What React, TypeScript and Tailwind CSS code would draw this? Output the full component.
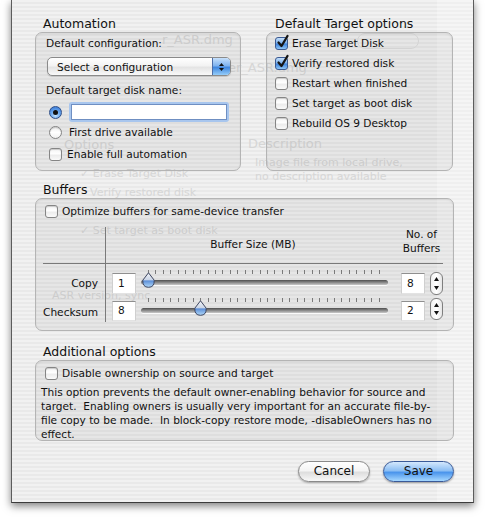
import React from "react";

const F = "font-['DejaVu_Sans',sans-serif]";
const stripes =
  "bg-[repeating-linear-gradient(180deg,#f1f1f1_0px,#f1f1f1_2px,#e9e9e9_2px,#e9e9e9_4px)]";
const groupBox =
  "rounded-[7px] border border-[#b4b4b4] bg-[rgba(0,0,0,0.045)] shadow-[inset_0_1px_2px_rgba(0,0,0,0.07)]";
const label = "text-[10.6px] leading-[14px] text-[#111] whitespace-nowrap";

function Checkbox({ checked }: { checked?: boolean }) {
  if (checked) {
    return (
      <span className="relative inline-block w-[13px] h-[13px] shrink-0 rounded-[3px] border border-[#3b5a92] bg-[linear-gradient(180deg,#c3def9_0%,#7fb2ee_45%,#3f83dc_55%,#8ec6f7_100%)]">
        <svg className="absolute left-[0px] top-[-4px]" width="14" height="15" viewBox="0 0 14 15">
          <path
            d="M2.5 8.5 L5.5 12 L11.5 2"
            fill="none"
            stroke="#151515"
            strokeWidth="2.3"
            strokeLinecap="round"
            strokeLinejoin="round"
          />
        </svg>
      </span>
    );
  }
  return (
    <span className="inline-block w-[13px] h-[13px] shrink-0 rounded-[3px] border border-[#858585] bg-[linear-gradient(180deg,#f4f4f4_0%,#ffffff_45%,#ececec_55%,#fafafa_100%)] shadow-[inset_0_1px_1px_rgba(0,0,0,0.18)]" />
  );
}

function Radio({ selected }: { selected?: boolean }) {
  if (selected) {
    return (
      <span className="relative inline-flex items-center justify-center w-[13px] h-[13px] shrink-0 rounded-full border border-[#2f4f88] bg-[radial-gradient(circle_at_50%_75%,#c8e6ff_0%,#6aa7ee_45%,#2f6fcf_100%)]">
        <span className="w-[5px] h-[5px] rounded-full bg-[#111]" />
      </span>
    );
  }
  return (
    <span className="inline-block w-[13px] h-[13px] shrink-0 rounded-full border border-[#858585] bg-[linear-gradient(180deg,#eeeeee_0%,#ffffff_50%,#f0f0f0_100%)] shadow-[inset_0_1px_1px_rgba(0,0,0,0.18)]" />
  );
}

function CheckRow({ checked, text, className = "" }: { checked?: boolean; text: string; className?: string }) {
  return (
    <div className={`flex items-center ${className}`}>
      <Checkbox checked={checked} />
      <span className={`ml-[4px] ${label}`}>{text}</span>
    </div>
  );
}

function Thumb() {
  return (
    <svg width="13" height="16" viewBox="0 0 13 16">
      <defs>
        <linearGradient id="thumbGrad" x1="0" y1="0" x2="0" y2="1">
          <stop offset="0" stopColor="#f4f6fa" />
          <stop offset="0.5" stopColor="#c9d4e6" />
          <stop offset="0.55" stopColor="#5b8ed8" />
          <stop offset="1" stopColor="#b4daf9" />
        </linearGradient>
      </defs>
      <path
        d="M6.5 0.8 L12.2 8.2 Q12.6 15.3 6.5 15.3 Q0.4 15.3 0.8 8.2 Z"
        fill="url(#thumbGrad)"
        stroke="#3e4660"
        strokeWidth="1"
      />
    </svg>
  );
}

function Slider({ value }: { value: number }) {
  const ticks = Array.from({ length: 32 }, (_, i) => i);
  return (
    <div className="relative w-[247px] h-[22px] ml-[5px] -mt-[4px] shrink-0">
      <div className="absolute top-[1px] left-[7px] right-[8px] h-[5px] flex justify-between">
        {ticks.map((t) => (
          <span key={t} className="w-[1px] h-[4px] bg-[#7a7a7a]" />
        ))}
      </div>
      <div className="absolute top-[11px] left-0 right-0 h-[5px] rounded-full bg-[linear-gradient(180deg,#4f4f4f_0%,#8a8a8a_50%,#c9c9c9_100%)] shadow-[0_1px_0_rgba(255,255,255,0.8)]" />
      <div className="absolute top-[3px]" style={{ left: `${1 + (value - 1) * 7.45}px` }}>
        <Thumb />
      </div>
    </div>
  );
}

function NumField({ value, className = "" }: { value: string; className?: string }) {
  return (
    <div
      className={`w-[24px] shrink-0 bg-white border-t border-t-[#8f8f8f] border-x border-x-[#cfcfcf] border-b border-b-[#e3e3e3] pl-[5px] flex items-center text-[10.6px] text-[#111] ${className}`}
    >
      {value}
    </div>
  );
}

function Stepper({ className = "" }: { className?: string }) {
  return (
    <div
      className={`w-[13px] shrink-0 rounded-[6px] border border-[#7f7f7f] bg-[linear-gradient(90deg,#f0f0f0,#ffffff_50%,#e6e6e6)] flex flex-col items-center justify-between py-[4px] ${className}`}
    >
      <svg width="5" height="4" viewBox="0 0 5 4">
        <path d="M2.5 0 L5 4 L0 4 Z" fill="#111" />
      </svg>
      <svg width="5" height="4" viewBox="0 0 5 4">
        <path d="M0 0 L5 0 L2.5 4 Z" fill="#111" />
      </svg>
    </div>
  );
}

function Ghosts() {
  const g = "absolute whitespace-nowrap leading-none text-[#d6d6d6]";
  return (
    <div className="absolute inset-0 pointer-events-none">
      <div className="absolute left-[425px] top-0 w-[36px] h-full bg-white/30" />
      <span className={`${g} left-[150px] top-[33px] text-[13px]`}>r_ASR.dmg</span>
      <span className={`${g} left-[216px] top-[61px] text-[13px]`}>er_ASR.dmg</span>
      <span className={`${g} left-[345px] top-[33px] w-[62px] h-[16px] rounded-full border border-[#dedede]`} />
      <span className={`${g} left-[52px] top-[138px] text-[13px]`}>Options</span>
      <span className={`${g} left-[236px] top-[137px] text-[13px]`}>Description</span>
      <span className={`${g} left-[243px] top-[157px] text-[11px]`}>Image file from local drive,</span>
      <span className={`${g} left-[243px] top-[171px] text-[11px]`}>no description available</span>
      <span className={`${g} left-[68px] top-[168px] text-[11px]`}>✓ Erase Target Disk</span>
      <span className={`${g} left-[78px] top-[187px] text-[11px]`}>Verify restored disk</span>
      <span className={`${g} left-[68px] top-[225px] text-[11px]`}>✓ Set target as boot disk</span>
      <span className={`${g} left-[40px] top-[290px] text-[11px]`}>ASR version, sync</span>
    </div>
  );
}

export default function App() {
  return (
    <div className={`w-[485px] h-[517px] bg-white overflow-hidden ${F}`}>
      <div
        className={`relative ml-[11px] w-[463px] h-[503px] border-x border-b border-x-[#5c5c5c] border-b-[#3c3c3c] ${stripes} shadow-[0_3px_8px_rgba(0,0,0,0.5)] text-[#111]`}
      >
        <Ghosts />
        <div className="relative pl-[23px] pr-[19px] pt-[15px]">
          {/* Top row */}
          <div className="flex gap-[25px]">
            <div className="w-[206px]">
              <div className="h-[17px] pl-[8px] text-[12.5px] leading-[17px]">Automation</div>
              <div className={`h-[139px] pt-[3px] ${groupBox}`}>
                <div className={`pl-[10px] ${label}`}>Default configuration:</div>
                <div className="ml-[11px] mt-[7px] w-[184px] h-[19px] flex rounded-[5px] border border-[#8a8a8a] overflow-hidden bg-[linear-gradient(180deg,#ffffff_0%,#f3f3f3_45%,#e4e4e4_55%,#f9f9f9_100%)] shadow-[0_1px_1px_rgba(0,0,0,0.15)]">
                  <div className={`flex-1 pl-[9px] flex items-center ${label}`}>Select a configuration</div>
                  <div className="w-[18px] border-l border-[#4d6ea8] flex flex-col items-center justify-center gap-[2px] bg-[linear-gradient(180deg,#c6e0fb_0%,#7fb3ef_45%,#3f86de_55%,#95cdf9_100%)]">
                    <svg width="5" height="3" viewBox="0 0 5 3">
                      <path d="M2.5 0 L5 3 L0 3 Z" fill="#111" />
                    </svg>
                    <svg width="5" height="3" viewBox="0 0 5 3">
                      <path d="M0 0 L5 0 L2.5 3 Z" fill="#111" />
                    </svg>
                  </div>
                </div>
                <div className={`pl-[10px] mt-[7px] ${label}`}>Default target disk name:</div>
                <div className="flex items-center mt-[5px] pl-[13px] h-[20px]">
                  <Radio selected />
                  <div className="ml-[7px] w-[160px] h-[20px] rounded-[3px] p-[2px] bg-[#a8c6ee]">
                    <div className="h-full bg-white border border-[#6f8fc2]" />
                  </div>
                </div>
                <div className="flex items-center mt-[2px] pl-[13px] h-[16px]">
                  <Radio />
                  <span className={`ml-[7px] ${label}`}>First drive available</span>
                </div>
                <div className="flex items-center mt-[6px] pl-[13px] h-[16px]">
                  <Checkbox />
                  <span className={`ml-[5px] ${label}`}>Enable full automation</span>
                </div>
              </div>
            </div>
            <div className="w-[187px]">
              <div className="h-[17px] pl-[9px] text-[12.5px] leading-[17px]">Default Target options</div>
              <div className={`h-[139px] pl-[8px] ${groupBox}`}>
                <CheckRow checked text="Erase Target Disk" className="h-[20px]" />
                <CheckRow checked text="Verify restored disk" className="h-[20px]" />
                <CheckRow text="Restart when finished" className="h-[20px]" />
                <CheckRow text="Set target as boot disk" className="h-[20px]" />
                <CheckRow text="Rebuild OS 9 Desktop" className="h-[20px]" />
              </div>
            </div>
          </div>

          {/* Buffers */}
          <div className="mt-[10px] h-[17px] pl-[8px] text-[12.5px] leading-[17px]">Buffers</div>
          <div className={`h-[133px] pt-[4px] ${groupBox}`}>
            <div className="pl-[9px] h-[16px] flex items-center">
              <Checkbox />
              <span className={`ml-[4px] ${label}`}>Optimize buffers for same-device transfer</span>
            </div>
            <div className="mt-[8px] ml-[7px] w-[400px]">
              <div className="flex h-[37px] border-b border-[#7a7a7a]">
                <div className="w-[63px] border-r border-[#7a7a7a]" />
                <div className={`flex-1 text-center pt-[10px] ${label}`}>Buffer Size (MB)</div>
                <div className={`w-[43px] text-center ${label}`}>
                  No. of
                  <br />
                  Buffers
                </div>
              </div>
              <div className="flex items-start h-[34px]">
                <div className={`h-full w-[63px] border-r border-[#7a7a7a] text-right pr-[7px] pt-[12px] ${label}`}>Copy</div>
                <div className="flex items-start pt-[9px]">
                  <NumField value="1" className="ml-[6px] h-[21px]" />
                  <Slider value={1} />
                  <NumField value="8" className="ml-[13px] h-[21px]" />
                  <Stepper className="ml-[5px] h-[23px] -mt-[1px]" />
                </div>
              </div>
              <div className="flex items-start h-[24px]">
                <div className={`h-full w-[63px] border-r border-[#7a7a7a] text-right pr-[7px] pt-[7px] ${label}`}>Checksum</div>
                <div className="flex items-start pt-[3px]">
                  <NumField value="8" className="ml-[6px] h-[20px]" />
                  <Slider value={8} />
                  <NumField value="2" className="ml-[13px] h-[20px]" />
                  <Stepper className="ml-[5px] h-[22px] -mt-[3px]" />
                </div>
              </div>
            </div>
          </div>

          {/* Additional options */}
          <div className="mt-[12px] h-[17px] pl-[8px] text-[12.5px] leading-[17px]">Additional options</div>
          <div className={`h-[81px] pt-[4px] ${groupBox}`}>
            <div className="pl-[9px] h-[16px] flex items-center">
              <Checkbox />
              <span className={`ml-[4px] ${label}`}>Disable ownership on source and target</span>
            </div>
            <p className={`mt-[4px] pl-[5px] whitespace-pre ${label}`}>
              {"This option prevents the default owner-enabling behavior for source and\ntarget.  Enabling owners is usually very important for an accurate file-by-\nfile copy to be made.  In block-copy restore mode, -disableOwners has no\neffect."}
            </p>
          </div>

          {/* Buttons */}
          <div className="mt-[20px] flex justify-end gap-[13px]">
            <button className="w-[72px] h-[21px] rounded-full border border-[#8a8a8a] bg-[linear-gradient(180deg,#ffffff_0%,#f4f4f4_45%,#dedede_55%,#f8f8f8_100%)] shadow-[0_1px_2px_rgba(0,0,0,0.3)] text-[12px] leading-[19px] text-[#111]">
              Cancel
            </button>
            <button className="w-[71px] h-[21px] rounded-full border border-[#3a5a98] bg-[linear-gradient(180deg,#d4e8fd_0%,#8dbff4_45%,#4b95ec_55%,#a6d8ff_100%)] shadow-[0_1px_2px_rgba(0,0,0,0.35)] text-[12px] leading-[19px] text-[#111]">
              Save
            </button>
          </div>
        </div>
      </div>
    </div>
  );
}
